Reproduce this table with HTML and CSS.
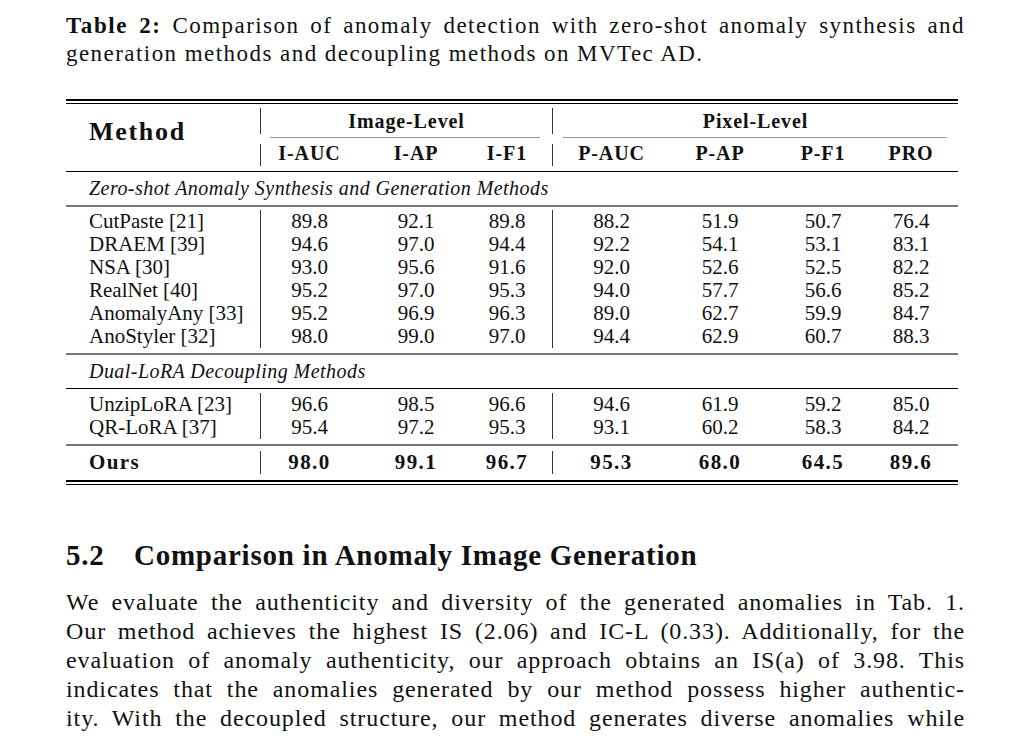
FILE: index.html
```html
<!DOCTYPE html>
<html>
<head>
    <title>Table 2 - Comparison</title>
    <link rel="stylesheet" href="styles.css">
</head>
<body>
    <p class="caption">
        <span class="ln"><b>Table 2:</b> Comparison of anomaly detection with zero-shot anomaly synthesis and</span>
        generation methods and decoupling methods on MVTec AD.
    </p>

    <table class="results">
        <colgroup>
            <col class="w0"><col class="w1"><col class="w2"><col class="w3">
            <col class="w4"><col class="w5"><col class="w6"><col class="w7">
        </colgroup>
        <tr class="rule"><td colspan="8"><div class="double"></div></td></tr>
        <tr class="gap4"><td colspan="8"></td></tr>
        <tr class="head1">
            <td class="method-head" rowspan="3">Method</td>
            <td class="sep" colspan="3">Image-Level</td>
            <td class="sep" colspan="4">Pixel-Level</td>
        </tr>
        <tr class="cmid">
            <td colspan="3"><div class="cmidrule left"></div></td>
            <td colspan="4"><div class="cmidrule right"></div></td>
        </tr>
        <tr class="head2">
            <td class="sep">I-AUC</td>
            <td>I-AP</td>
            <td class="c3">I-F1</td>
            <td class="sep">P-AUC</td>
            <td>P-AP</td>
            <td>P-F1</td>
            <td class="c7">PRO</td>
        </tr>
        <tr class="gap5"><td colspan="8"></td></tr>
        <tr class="rule"><td colspan="8"><div class="line dark"></div></td></tr>

        <tr class="group"><td colspan="8">Zero-shot Anomaly Synthesis and Generation Methods</td></tr>
        <tr class="rule"><td colspan="8"><div class="line grey"></div></td></tr>
        <tr class="gap3"><td colspan="8"></td></tr>
        <tr class="row">
            <td class="c0">CutPaste [21]</td>
            <td class="sep">89.8</td><td>92.1</td><td class="c3">89.8</td>
            <td class="sep">88.2</td><td>51.9</td><td>50.7</td><td class="c7">76.4</td>
        </tr>
        <tr class="row">
            <td class="c0">DRAEM [39]</td>
            <td class="sep">94.6</td><td>97.0</td><td class="c3">94.4</td>
            <td class="sep">92.2</td><td>54.1</td><td>53.1</td><td class="c7">83.1</td>
        </tr>
        <tr class="row">
            <td class="c0">NSA [30]</td>
            <td class="sep">93.0</td><td>95.6</td><td class="c3">91.6</td>
            <td class="sep">92.0</td><td>52.6</td><td>52.5</td><td class="c7">82.2</td>
        </tr>
        <tr class="row">
            <td class="c0">RealNet [40]</td>
            <td class="sep">95.2</td><td>97.0</td><td class="c3">95.3</td>
            <td class="sep">94.0</td><td>57.7</td><td>56.6</td><td class="c7">85.2</td>
        </tr>
        <tr class="row">
            <td class="c0">AnomalyAny [33]</td>
            <td class="sep">95.2</td><td>96.9</td><td class="c3">96.3</td>
            <td class="sep">89.0</td><td>62.7</td><td>59.9</td><td class="c7">84.7</td>
        </tr>
        <tr class="row">
            <td class="c0">AnoStyler [32]</td>
            <td class="sep">98.0</td><td>99.0</td><td class="c3">97.0</td>
            <td class="sep">94.4</td><td>62.9</td><td>60.7</td><td class="c7">88.3</td>
        </tr>
        <tr class="gap5"><td colspan="8"></td></tr>
        <tr class="rule"><td colspan="8"><div class="line grey"></div></td></tr>

        <tr class="group"><td colspan="8">Dual-LoRA Decoupling Methods</td></tr>
        <tr class="rule"><td colspan="8"><div class="line dark"></div></td></tr>
        <tr class="gap4"><td colspan="8"></td></tr>
        <tr class="row">
            <td class="c0">UnzipLoRA [23]</td>
            <td class="sep">96.6</td><td>98.5</td><td class="c3">96.6</td>
            <td class="sep">94.6</td><td>61.9</td><td>59.2</td><td class="c7">85.0</td>
        </tr>
        <tr class="row">
            <td class="c0">QR-LoRA [37]</td>
            <td class="sep">95.4</td><td>97.2</td><td class="c3">95.3</td>
            <td class="sep">93.1</td><td>60.2</td><td>58.3</td><td class="c7">84.2</td>
        </tr>
        <tr class="gap5"><td colspan="8"></td></tr>
        <tr class="rule"><td colspan="8"><div class="line grey"></div></td></tr>
        <tr class="gap5"><td colspan="8"></td></tr>
        <tr class="row best">
            <td class="c0">Ours</td>
            <td class="sep">98.0</td><td>99.1</td><td class="c3">96.7</td>
            <td class="sep">95.3</td><td>68.0</td><td>64.5</td><td class="c7">89.6</td>
        </tr>
        <tr class="gap6"><td colspan="8"></td></tr>
        <tr class="rule"><td colspan="8"><div class="double"></div></td></tr>
    </table>

    <h2 class="section"><span class="num">5.2</span>Comparison in Anomaly Image Generation</h2>

    <p class="body-text">
        <span class="ln">We evaluate the authenticity and diversity of the generated anomalies in Tab. 1.</span>
        <span class="ln">Our method achieves the highest IS (2.06) and IC-L (0.33). Additionally, for the</span>
        <span class="ln">evaluation of anomaly authenticity, our approach obtains an IS(a) of 3.98. This</span>
        <span class="ln">indicates that the anomalies generated by our method possess higher authentic-</span>
        <span class="ln">ity. With the decoupled structure, our method generates diverse anomalies while</span>
    </p>
</body>
</html>
```

FILE: styles.css
```css
body {
    margin: 0 65px 0 66px;
    background-color: #ffffff;
    color: #111111;
    font-family: "Liberation Serif", "Times New Roman", serif;
}

.ln {
    display: block;
    text-align: justify;
    text-align-last: justify;
}

/* caption */

.caption {
    margin: 12px 0 0 0;
    font-size: 23px;
    line-height: 28px;
    letter-spacing: 1.45px;
}

.caption b {
    letter-spacing: 1.6px;
}

/* table */

.results {
    width: 892px;
    margin-top: 31px;
    border-collapse: separate;
    border-spacing: 0;
    font-size: 21px;
    table-layout: fixed;
}

.w0 { width: 194px; }
.w1 { width: 98px; }
.w2 { width: 116px; }
.w3 { width: 78px; }
.w4 { width: 118px; }
.w5 { width: 100px; }
.w6 { width: 106px; }
.w7 { width: 82px; }

.results td {
    padding: 0;
    text-align: center;
    white-space: nowrap;
}

.results td.c3,
.results td.c7 {
    padding-right: 12px;
}

.rule td {
    height: 0;
}

.double {
    height: 2px;
    border-top: 2px solid #000;
    border-bottom: 1px solid #000;
}

.line {
    height: 0;
}

.line.dark {
    border-top: 1px solid #000;
}

.line.grey {
    border-top: 2px solid #777;
}

.gap3 td { height: 3px; }
.gap4 td { height: 4px; }
.gap5 td { height: 5px; }
.gap6 td { height: 6px; }

.head1 td,
.head2 td {
    font-weight: bold;
    font-size: 20px;
    letter-spacing: 0.9px;
    vertical-align: top;
}

.head1 td {
    height: 26px;
    line-height: 26px;
}

.head2 td {
    height: 22px;
    line-height: 18px;
}

.results td.method-head {
    text-align: left;
    vertical-align: middle;
    padding-left: 23px;
    padding-bottom: 10px;
    font-size: 26px;
    letter-spacing: 1.7px;
}

.sep {
    border-left: 1px solid #333;
}

.cmid td {
    height: 10px;
    vertical-align: top;
}

.cmidrule {
    margin-top: 3px;
    border-top: 1px solid #999;
}

.cmidrule.left {
    margin-left: 10px;
    margin-right: 12px;
}

.cmidrule.right {
    margin-left: 11px;
    margin-right: 11px;
}

.group td {
    height: 33px;
    text-align: left;
    padding-left: 23px;
    font-style: italic;
    font-size: 20px;
    letter-spacing: 0.45px;
}

.row td {
    height: 23px;
    line-height: 23px;
}

.results .row td.c0 {
    text-align: left;
    padding-left: 23px;
}

.best td {
    font-weight: bold;
    letter-spacing: 1.4px;
}

/* section */

.section {
    margin: 52px 0 0 0;
    font-size: 29px;
    line-height: 36px;
    font-weight: bold;
    letter-spacing: 0.75px;
}

.section .num {
    display: inline-block;
    width: 68px;
}

.body-text {
    margin: 15px 0 0 0;
    font-size: 24px;
    line-height: 29px;
    letter-spacing: 0.9px;
}
```
